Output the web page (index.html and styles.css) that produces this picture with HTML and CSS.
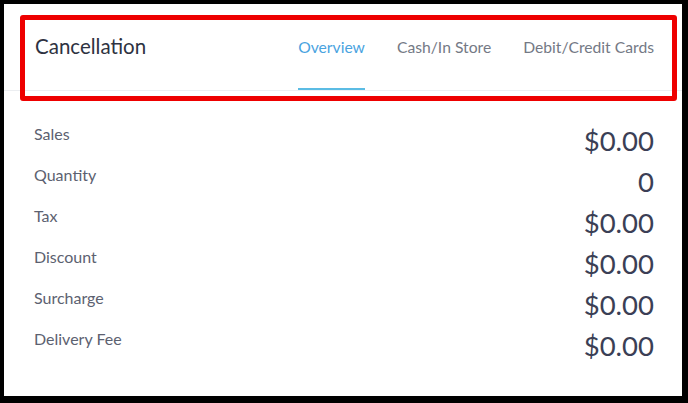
FILE: index.html
```html
<!DOCTYPE html>
<html lang="en">
<head>
  <meta charset="UTF-8">
  <meta name="viewport" content="width=device-width, initial-scale=1.0">
  <title>Cancellation</title>
  <link rel="stylesheet" href="styles.css">
</head>
<body>
  <div class="card">
    <!-- Header with tabs -->
    <div class="header">
      <h1 class="title">Cancellation</h1>
      <nav class="tabs">
        <a class="tab active">Overview</a>
        <a class="tab">Cash/In Store</a>
        <a class="tab">Debit/Credit Cards</a>
      </nav>
    </div>

    <!-- Totals -->
    <div class="summary">
      <div class="row"><span class="label">Sales</span><span class="value">$0.00</span></div>
      <div class="row"><span class="label">Quantity</span><span class="value">0</span></div>
      <div class="row"><span class="label">Tax</span><span class="value">$0.00</span></div>
      <div class="row"><span class="label">Discount</span><span class="value">$0.00</span></div>
      <div class="row"><span class="label">Surcharge</span><span class="value">$0.00</span></div>
      <div class="row"><span class="label">Delivery Fee</span><span class="value">$0.00</span></div>
    </div>

    <div class="highlight"></div>
  </div>
</body>
</html>
```

FILE: styles.css
```css
html, body {
  height: 100%;
}
body {
  margin: 0;
  box-sizing: border-box;
  padding: 4px 6px 7px 4px;
  background: #000000;
  font-family: Lato, "Open Sans", sans-serif;
}
.card {
  position: relative;
  height: 100%;
  background-color: #FFFFFF;
}
.header {
  display: flex;
  align-items: stretch;
  justify-content: space-between;
  height: 86px;
  padding: 0 28px 0 31px;
  border-bottom: 1px solid #ECEEF1;
}
.title {
  margin: 0 0 2px;
  align-self: center;
  font-size: 20.5px;
  font-weight: 400;
  color: #2E3241;
}
.tabs {
  display: flex;
  gap: 32px;
}
.tab {
  display: flex;
  align-items: center;
  padding-top: 1px;
  border-bottom: 2px solid transparent;
  font-size: 15.7px;
  color: #747985;
  cursor: pointer;
}
.tab.active {
  color: #4AA3DF;
  border-bottom-color: #5BBCE4;
}
.summary {
  padding: 33px 28px 0 30px;
}
.row {
  display: flex;
  justify-content: space-between;
  align-items: flex-start;
  height: 41px;
}
.label {
  font-size: 16px;
  line-height: 20px;
  color: #5C6170;
}
.value {
  padding-top: 1px;
  font-size: 27.5px;
  line-height: 32px;
  color: #3B3F55;
}
.highlight {
  position: absolute;
  left: 16px;
  top: 11px;
  width: 647px;
  height: 76px;
  border: 5px solid #EE0000;
  border-radius: 3px;
}
```
